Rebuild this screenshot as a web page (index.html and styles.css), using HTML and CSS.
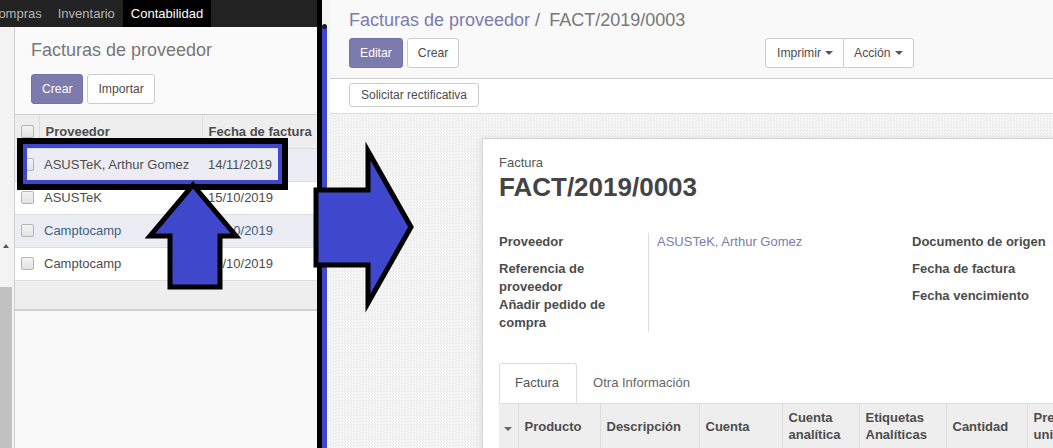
FILE: index.html
```html
<!DOCTYPE html>
<html lang="es">
<head>
<meta charset="utf-8">
<title>Facturas de proveedor</title>
<link rel="stylesheet" href="styles.css">
</head>
<body>
<div class="screen">
  <section class="left">
    <nav class="topnav">
      <div class="nav-list">
        <span class="nav-item">Compras</span>
        <span class="nav-item">Inventario</span>
        <span class="nav-item active">Contabilidad</span>
      </div>
    </nav>
    <div class="left-body">
      <div class="scroll">
        <div class="track"><span class="up"></span></div>
        <div class="thumb"></div>
      </div>
      <div class="list-view">
        <div class="cp">
          <h2 class="cp-title">Facturas de proveedor</h2>
          <div class="btns">
            <button class="btn primary">Crear</button>
            <button class="btn">Importar</button>
          </div>
        </div>
        <table class="list">
          <thead>
            <tr><th class="c-chk"><span class="chk"></span></th><th class="c-name">Proveedor</th><th class="c-date">Fecha de factura</th></tr>
          </thead>
          <tbody>
            <tr class="hl"><td class="c-chk"><span class="chk"></span></td><td>ASUSTeK, Arthur Gomez</td><td>14/11/2019</td></tr>
            <tr><td class="c-chk"><span class="chk"></span></td><td>ASUSTeK</td><td>15/10/2019</td></tr>
            <tr class="hl info"><td class="c-chk"><span class="chk"></span></td><td>Camptocamp</td><td>10/10/2019</td></tr>
            <tr><td class="c-chk"><span class="chk"></span></td><td>Camptocamp</td><td>10/10/2019</td></tr>
          </tbody>
          <tfoot>
            <tr><td></td><td></td><td></td></tr>
          </tfoot>
        </table>
      </div>
    </div>
  </section>

  <div class="divider"></div>

  <section class="right">
    <div class="cp2">
      <div class="crumbs"><span class="crumb-link">Facturas de proveedor</span><span class="sep">/</span><span class="crumb-active">FACT/2019/0003</span></div>
      <div class="cp2-row">
        <div class="btns">
          <button class="btn primary">Editar</button>
          <button class="btn">Crear</button>
        </div>
        <div class="btn-group">
          <button class="btn">Imprimir<span class="caret"></span></button>
          <button class="btn">Acción<span class="caret"></span></button>
        </div>
      </div>
    </div>
    <div class="statusbar">
      <button class="btn sm">Solicitar rectificativa</button>
    </div>
    <div class="form-bg">
      <div class="sheet">
        <div class="doc-label">Factura</div>
        <h1 class="doc-title">FACT/2019/0003</h1>
        <div class="groups">
          <div class="group g-left">
            <div class="lbl">Proveedor</div><div class="val link">ASUSTeK, Arthur Gomez</div>
            <div class="lbl">Referencia de<br>proveedor</div><div class="val"></div>
            <div class="lbl">Añadir pedido de<br>compra</div><div class="val"></div>
          </div>
          <div class="group g-right">
            <div class="lbl">Documento de origen</div>
            <div class="lbl">Fecha de factura</div>
            <div class="lbl">Fecha vencimiento</div>
          </div>
        </div>
        <div class="tabs">
          <span class="tab active">Factura</span>
          <span class="tab">Otra Información</span>
        </div>
        <table class="lines">
          <thead>
            <tr>
              <th class="l-caret"><span class="caret"></span></th>
              <th class="l-prod">Producto</th>
              <th class="l-desc">Descripción</th>
              <th class="l-acc">Cuenta</th>
              <th class="l-ana">Cuenta<br>analítica</th>
              <th class="l-tag">Etiquetas<br>Analíticas</th>
              <th class="l-qty">Cantidad</th>
              <th class="l-price">Precio<br>unitario</th>
            </tr>
          </thead>
        </table>
      </div>
    </div>
  </section>

  <svg class="annot" width="1053" height="448" viewBox="0 0 1053 448" aria-hidden="true">
    <rect x="322" y="27" width="5" height="430" fill="#3f48cc"/>
    <rect x="322" y="24" width="5" height="5" rx="2.5" fill="#1a1a2a"/>
    <rect x="20" y="141" width="265" height="46" fill="none" stroke="#000" stroke-width="6"/>
    <rect x="25" y="146" width="255" height="36" fill="none" stroke="#3f48cc" stroke-width="4"/>
    <polygon points="193,185 236,236 220,236 220,287 170,287 170,236 150,236" fill="#3f48cc" stroke="#000" stroke-width="5" stroke-linejoin="miter"/>
    <polygon points="316,190 368,190 368,151 411,227 368,303 368,265 316,265" fill="#3f48cc" stroke="#000" stroke-width="5" stroke-linejoin="miter"/>
  </svg>
</div>
</body>
</html>
```

FILE: styles.css
```css
* { box-sizing: border-box; }

body {
  margin: 0;
  font-family: "Liberation Sans", Arial, sans-serif;
  font-size: 13px;
  color: #4c4c4c;
  overflow: hidden;
}

.screen {
  position: relative;
  display: flex;
  width: 1053px;
  height: 448px;
  overflow: hidden;
}

.annot {
  position: absolute;
  left: 0;
  top: 0;
  pointer-events: none;
}

/* ---------- left panel ---------- */
.left {
  width: 317px;
  flex: none;
  display: flex;
  flex-direction: column;
  overflow: hidden;
  background: #f9f9f9;
}

.topnav {
  height: 27px;
  flex: none;
  background: #222;
  overflow: hidden;
}

.nav-list {
  display: flex;
  margin-left: -19px;
}

.nav-item {
  padding: 0 8px;
  line-height: 27px;
  font-size: 13px;
  color: #b4b4b4;
  white-space: nowrap;
}

.nav-item.active {
  background: #000;
  color: #fff;
}

.left-body {
  flex: 1;
  display: flex;
  min-height: 0;
}

.scroll {
  width: 15px;
  flex: none;
  display: flex;
  flex-direction: column;
  background: #f3f3f3;
  border-right: 1px solid #cfcfcf;
}

.track {
  flex: 1;
  display: flex;
  flex-direction: column;
  justify-content: flex-end;
  padding: 0 0 39px 3px;
}

.up {
  width: 0;
  height: 0;
  border-left: 3.5px solid transparent;
  border-right: 3.5px solid transparent;
  border-bottom: 4px solid #555;
}

.thumb {
  width: 12px;
  height: 161px;
  background: #c1c1c1;
}

.list-view {
  flex: 1;
  display: flex;
  flex-direction: column;
  background: #f9f9f9;
}

.cp {
  height: 88px;
  padding: 12px 16px 0;
  background: #fafafa;
  border-bottom: 1px solid #cfcfcf;
}

.cp-title {
  margin: 0 0 13px;
  font-size: 18px;
  line-height: 22px;
  font-weight: normal;
  color: #777;
  white-space: nowrap;
}

.btns {
  display: flex;
  gap: 4px;
}

.btn {
  height: 30px;
  padding: 0 10px;
  border: 1px solid #ccc;
  border-radius: 3px;
  background: #fff;
  font-family: inherit;
  font-size: 12.2px;
  color: #4c4c4c;
  white-space: nowrap;
  display: inline-flex;
  align-items: center;
}

.btn.primary {
  background: #7c7bad;
  border-color: #7372a4;
  color: #fff;
}

.btn.sm {
  height: 24px;
  padding: 0 11px;
  font-size: 12px;
}

.list {
  width: 302px;
  border-collapse: collapse;
  table-layout: fixed;
  background: #fff;
}

.list th {
  height: 33px;
  background: #eee;
  text-align: left;
  font-weight: bold;
  padding: 0 6px;
  border-bottom: 1px solid #ddd;
  white-space: nowrap;
  overflow: hidden;
}

.list th + th {
  border-left: 1px solid #ddd;
}

.list .c-chk { width: 24px; padding: 0 0 0 6px; }
.list .c-name { width: 163px; }

.list td {
  height: 33px;
  padding: 0 5px;
  border-top: 1px solid #ddd;
  white-space: nowrap;
  overflow: hidden;
}

.list tbody td:last-child { padding-left: 6px; }

.list tr.hl td { background: #ececf5; }
.list tr.info td { color: #3f5f82; }

.chk {
  display: block;
  width: 13px;
  height: 13px;
  border: 1px solid #b5b5b5;
  border-radius: 2px;
  background: linear-gradient(#f4f4f4, #e2e2e2);
}

.list tfoot td {
  height: 30px;
  background: #eee;
  border-top: 1px solid #ddd;
  border-bottom: 2px solid #cfcfcf;
}

/* ---------- divider ---------- */
.divider {
  width: 13px;
  flex: none;
  border-left: 5px solid #000;
  background: #f4f4f4;
}

/* ---------- right panel ---------- */
.right {
  flex: 1;
  display: flex;
  flex-direction: column;
  min-width: 0;
  overflow: hidden;
}

.cp2 {
  height: 79px;
  flex: none;
  padding: 8px 19px 0;
  background: #f9f9f9;
  border-bottom: 1px solid #cfcfcf;
}

.crumbs {
  font-size: 18px;
  line-height: 24px;
  white-space: nowrap;
}

.crumb-link { color: #7c7bad; }
.crumbs .sep { color: #777; padding: 0 9px 0 5px; }
.crumb-active { color: #777; }

.cp2-row {
  display: grid;
  grid-template-columns: 416px auto;
  margin-top: 6px;
}

.btn-group {
  display: flex;
}

.btn-group .btn:first-child {
  border-radius: 3px 0 0 3px;
  padding: 0 10px 0 11px;
}

.btn-group .btn + .btn {
  border-left: 1px solid #ccc;
  margin-left: -1px;
  border-radius: 0 3px 3px 0;
  padding: 0 10px 0 10px;
}

.caret {
  display: inline-block;
  width: 0;
  height: 0;
  margin-left: 4px;
  border-left: 4px solid transparent;
  border-right: 4px solid transparent;
  border-top: 4px solid #555;
}

.statusbar {
  height: 35px;
  flex: none;
  padding: 4px 19px 0;
  background: #fff;
  border-bottom: 1px solid #ddd;
}

.form-bg {
  flex: 1;
  padding: 24px 0 0 152px;
  background-color: #f2f2f2;
  background-image: repeating-conic-gradient(#f7f7f7 0 25%, #ececec 0 50%);
  background-size: 3px 3px;
  overflow: hidden;
}

.sheet {
  width: 800px;
  height: 400px;
  padding: 16px 16px 0;
  background: #fff;
  border: 1px solid #d2d2d2;
  box-shadow: -2px 0 6px rgba(0, 0, 0, 0.08);
}

.doc-label {
  line-height: 16px;
  color: #555;
}

.doc-title {
  margin: 1px 0 0;
  font-size: 26px;
  line-height: 30px;
  font-weight: bold;
  color: #444;
}

.groups {
  display: flex;
  align-items: flex-start;
  margin-top: 31px;
}

.group {
  display: grid;
  grid-auto-rows: minmax(27px, auto);
  align-content: start;
  line-height: 18px;
}

.g-left {
  width: 413px;
  grid-template-columns: 150px 1fr;
}

.g-left .lbl {
  border-right: 1px solid #ddd;
}

.lbl {
  font-weight: bold;
  color: #4c4c4c;
  white-space: nowrap;
}

.val {
  padding-left: 8px;
}

.val.link {
  color: #7c7bad;
}

.tabs {
  display: flex;
  margin-top: 31px;
  height: 40px;
}

.tab {
  padding: 0 17px 0 15px;
  line-height: 38px;
  color: #666;
  border: 1px solid transparent;
  border-bottom: 0;
}

.tab.active {
  color: #555;
  border-color: #ddd;
  border-radius: 3px 3px 0 0;
}

.lines {
  border-collapse: collapse;
  table-layout: fixed;
  width: 640px;
}

.lines th {
  height: 45px;
  padding: 0 6px;
  background: #eee;
  border-top: 1px solid #ddd;
  text-align: left;
  font-weight: bold;
  line-height: 17px;
  color: #4c4c4c;
  vertical-align: middle;
  white-space: nowrap;
}

.lines th + th {
  border-left: 1px solid #ddd;
}

.lines .l-caret { width: 19px; padding: 0 0 0 5px; }
.lines .l-caret .caret { margin: 0; border-top-color: #666; }
.lines .l-prod { width: 82px; }
.lines .l-desc { width: 99px; }
.lines .l-acc { width: 83px; }
.lines .l-ana { width: 77px; }
.lines .l-tag { width: 87px; }
.lines .l-qty { width: 81px; }
.lines .l-price { width: 112px; }
```
